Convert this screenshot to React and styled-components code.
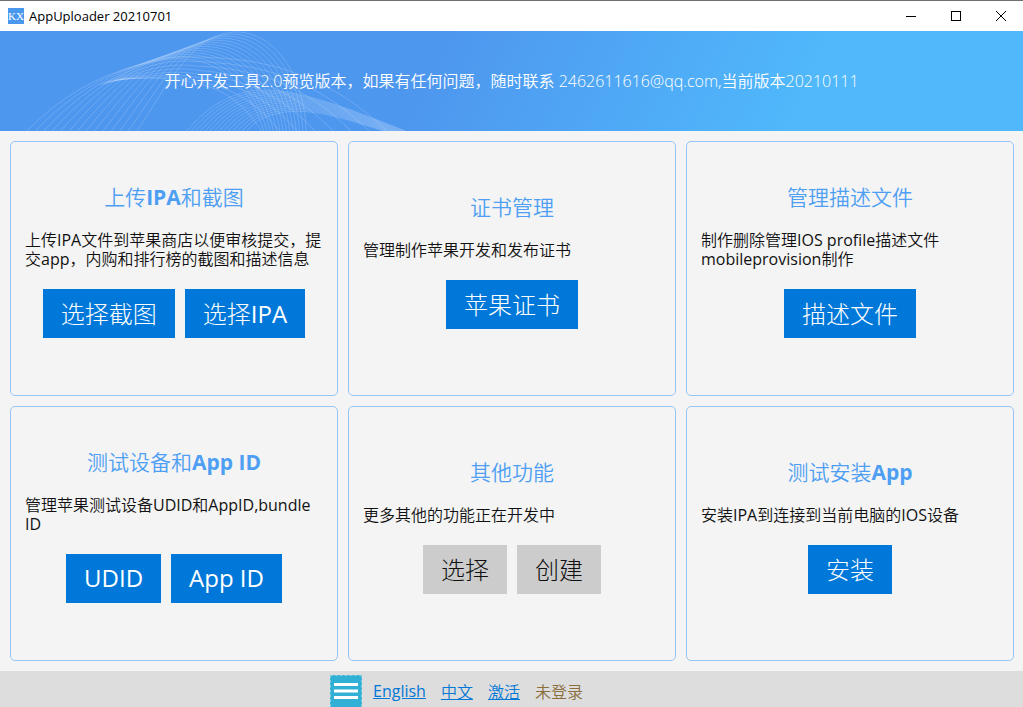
import React from "react";
import styled, { createGlobalStyle } from "styled-components";

const GlobalStyle = createGlobalStyle`
  * {
    box-sizing: border-box;
  }

  body {
    margin: 0;
    background: #f4f4f4;
    color: #111;
    font-family: "Open Sans", "Noto Sans CJK SC DemiLight", "Noto Sans CJK SC", sans-serif;
    font-size: 16px;
  }

  button {
    font-family: inherit;
    cursor: pointer;
  }
`;

const Page = styled.div`
  display: flex;
  flex-direction: column;
  min-height: 100vh;
`;

const TitleBar = styled.header`
  display: flex;
  align-items: center;
  height: 31px;
  padding-left: 8px;
  background: #fff;
  border-top: 1px solid #707070;
`;

const Logo = styled.span`
  width: 16px;
  height: 16px;
  margin-right: 5px;
  background: #4a98ee;
  color: #fff;
  font-family: "Liberation Serif", serif;
  font-size: 11px;
  line-height: 16px;
  text-align: center;
`;

const AppName = styled.h1`
  flex: 1;
  margin: 0;
  color: #000;
  font-size: 13px;
  font-weight: 400;
`;

const WindowButton = styled.button`
  display: flex;
  align-items: center;
  justify-content: center;
  width: 45px;
  height: 30px;
  padding: 0;
  border: 0;
  background: transparent;
`;

const Banner = styled.div`
  position: relative;
  display: flex;
  align-items: center;
  justify-content: center;
  height: 100px;
  background: linear-gradient(115deg, #4e97ef 42%, #50b8fb 78%);

  p {
    position: relative;
    margin: 0;
    padding-bottom: 2px;
    color: #fff;
    font-weight: 350;
  }
`;

const WaveSvg = styled.svg`
  position: absolute;
  top: 0;
  left: 0;
`;

const Cards = styled.main`
  flex: 1;
  display: grid;
  grid-template-columns: repeat(3, 1fr);
  grid-auto-rows: 1fr;
  gap: 10px;
  padding: 10px 9px 10px 10px;
`;

const CardBox = styled.section`
  display: flex;
  flex-direction: column;
  justify-content: center;
  padding: 0 14px 15px;
  border: 1px solid #96c5f5;
  border-radius: 5px;

  h2 {
    margin: 0 0 21px;
    color: #4e9ff3;
    font-size: 21px;
    font-weight: 300;
    line-height: 26px;
    text-align: center;
  }

  b {
    font-weight: 700;
  }

  p {
    margin: 0 0 20px;
    line-height: 19px;
  }
`;

const ButtonRow = styled.div`
  display: flex;
  justify-content: center;
  gap: 10px;
`;

const ActionButton = styled.button`
  height: 49px;
  padding: 0 18px 2px;
  border: 0;
  background: ${(props) => (props.$plain ? "#ccc" : "#0078d9")};
  color: ${(props) => (props.$plain ? "#111" : "#fff")};
  font-family: "Open Sans", "Noto Sans CJK SC Light", "Noto Sans CJK SC", sans-serif;
  font-size: 24px;
`;

const Footer = styled.footer`
  display: flex;
  align-items: center;
  justify-content: center;
  gap: 15px;
  height: 36px;
  padding: 4px 110px 0 0;
  background: #ddd;

  a {
    color: #0078d7;
  }
`;

const MenuButton = styled.button`
  display: flex;
  width: 32px;
  height: 32px;
  margin-right: -4px;
  padding: 0;
  border: 1px dashed #7fcbe2;
  border-bottom: 0;
  background: #31b0d5;
`;

const Status = styled.span`
  color: #8a6d3b;
`;

const cards = [
  {
    id: "ipa",
    title: (
      <>
        上传<b>IPA</b>和截图
      </>
    ),
    text: "上传IPA文件到苹果商店以便审核提交，提交app，内购和排行榜的截图和描述信息",
    buttons: ["选择截图", "选择IPA"],
  },
  {
    id: "cert",
    title: "证书管理",
    text: "管理制作苹果开发和发布证书",
    buttons: ["苹果证书"],
  },
  {
    id: "profile",
    title: "管理描述文件",
    text: "制作删除管理IOS profile描述文件mobileprovision制作",
    buttons: ["描述文件"],
  },
  {
    id: "device",
    title: (
      <>
        测试设备和<b>App ID</b>
      </>
    ),
    text: "管理苹果测试设备UDID和AppID,bundle ID",
    buttons: ["UDID", "App ID"],
  },
  {
    id: "other",
    title: "其他功能",
    text: "更多其他的功能正在开发中",
    buttons: ["选择", "创建"],
    plain: true,
  },
  {
    id: "install",
    title: (
      <>
        测试安装<b>App</b>
      </>
    ),
    text: "安装IPA到连接到当前电脑的IOS设备",
    buttons: ["安装"],
  },
];

// blends two curves with the same commands into a fan of lines
const fan = (from, to, count) =>
  Array.from({ length: count }, (_, i) => {
    const t = i / (count - 1);
    const n = from.map((v, k) => Math.round((v + (to[k] - v) * t) * 10) / 10);
    return `M${n[0]} ${n[1]}C${n.slice(2, 8).join(" ")}C${n.slice(8).join(" ")}`;
  });

const waveLines = [
  ...fan(
    [26, 101, 65, 60, 115, 35, 170, 28, 215, 24, 250, 52, 264, 101],
    [136, 101, 165, 60, 190, 2, 236, 1, 275, 1, 305, 45, 306, 101],
    14
  ),
  ...fan(
    [100, 54, 135, 38, 155, 24, 190, 26, 260, 26, 325, 40, 388, 101],
    [120, 48, 165, 46, 190, 48, 215, 58, 235, 66, 250, 82, 262, 101],
    8
  ),
  ...fan(
    [186, 101, 205, 78, 225, 65, 250, 60, 290, 54, 345, 76, 408, 101],
    [246, 101, 255, 90, 265, 84, 285, 81, 320, 77, 355, 92, 388, 101],
    14
  ),
];

const Waves = () => (
  <WaveSvg width="420" height="100" viewBox="0 0 420 100" aria-hidden="true">
    <g fill="none" stroke="#fff" strokeOpacity="0.17" strokeWidth="1">
      {waveLines.map((d) => (
        <path key={d} d={d} />
      ))}
    </g>
  </WaveSvg>
);

const Card = ({ title, text, buttons, plain }) => (
  <CardBox>
    <h2>{title}</h2>
    <p>{text}</p>
    <ButtonRow>
      {buttons.map((label) => (
        <ActionButton key={label} type="button" $plain={plain}>
          {label}
        </ActionButton>
      ))}
    </ButtonRow>
  </CardBox>
);

const App = () => {
  return (
    <Page>
      <GlobalStyle />
      <TitleBar>
        <Logo>KX</Logo>
        <AppName>AppUploader 20210701</AppName>
        <WindowButton type="button" aria-label="Minimize">
          <svg width="10" height="10" viewBox="0 0 10 10">
            <path d="M0 5.5h10" stroke="#000" />
          </svg>
        </WindowButton>
        <WindowButton type="button" aria-label="Maximize">
          <svg width="10" height="10" viewBox="0 0 10 10">
            <rect x="0.5" y="0.5" width="9" height="9" fill="none" stroke="#000" />
          </svg>
        </WindowButton>
        <WindowButton type="button" aria-label="Close">
          <svg width="10" height="10" viewBox="0 0 10 10">
            <path d="M0 0l10 10M10 0L0 10" stroke="#000" />
          </svg>
        </WindowButton>
      </TitleBar>

      <Banner>
        <Waves />
        <p>
          开心开发工具2.0预览版本，如果有任何问题，随时联系
          2462611616@qq.com,当前版本20210111
        </p>
      </Banner>

      <Cards>
        {cards.map(({ id, ...card }) => (
          <Card key={id} {...card} />
        ))}
      </Cards>

      <Footer>
        <MenuButton type="button" aria-label="Menu">
          <svg width="30" height="31" viewBox="0 0 30 31">
            <path d="M3 8.5h24M3 15h24M3 21.5h24" stroke="#fff" strokeWidth="3" />
          </svg>
        </MenuButton>
        <a href="#en">English</a>
        <a href="#zh">中文</a>
        <a href="#activate">激活</a>
        <Status>未登录</Status>
      </Footer>
    </Page>
  );
};

export default App;
